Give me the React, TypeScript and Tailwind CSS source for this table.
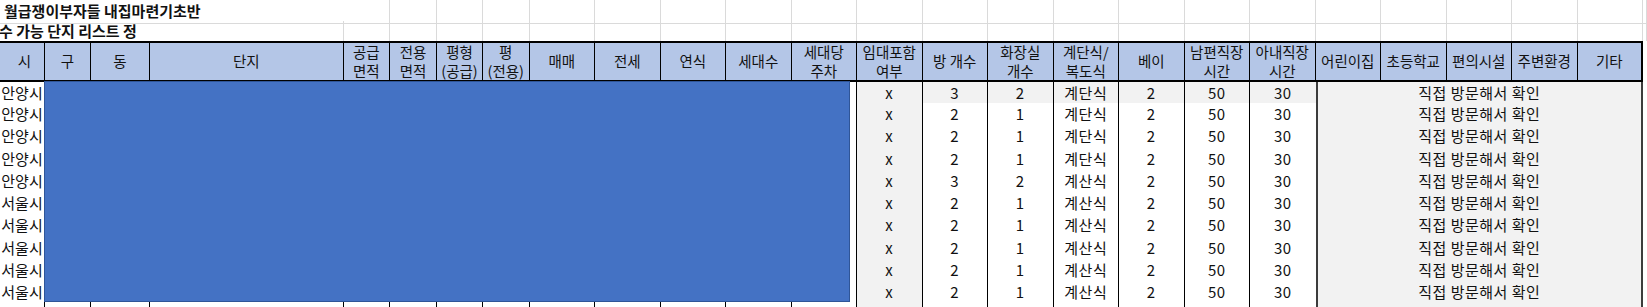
import React from 'react'

const GRID =
    'grid grid-cols-[45px_46px_59px_193.5px_46.5px_47px_46px_46.5px_repeat(17,65.5px)_4px]'

type Label = string | [string, string]

const HEADERS: Label[] = [
    '시',
    '구',
    '동',
    '단지',
    ['공급', '면적'],
    ['전용', '면적'],
    ['평형', '(공급)'],
    ['평', '(전용)'],
    '매매',
    '전세',
    '연식',
    '세대수',
    ['세대당', '주차'],
    ['임대포함', '여부'],
    '방 개수',
    ['화장실', '개수'],
    ['계단식/', '복도식'],
    '베이',
    ['남편직장', '시간'],
    ['아내직장', '시간'],
    '어린이집',
    '초등학교',
    '편의시설',
    '주변환경',
    '기타',
]

const ROWS = [
    { city: '안양시', rooms: '3', baths: '2', stair: '계단식' },
    { city: '안양시', rooms: '2', baths: '1', stair: '계단식' },
    { city: '안양시', rooms: '2', baths: '1', stair: '계단식' },
    { city: '안양시', rooms: '2', baths: '1', stair: '계단식' },
    { city: '안양시', rooms: '3', baths: '2', stair: '계산식' },
    { city: '서울시', rooms: '2', baths: '1', stair: '계산식' },
    { city: '서울시', rooms: '2', baths: '1', stair: '계산식' },
    { city: '서울시', rooms: '2', baths: '1', stair: '계산식' },
    { city: '서울시', rooms: '2', baths: '1', stair: '계산식' },
    { city: '서울시', rooms: '2', baths: '1', stair: '계산식' },
]

function TitleRows() {
    return (
        <>
            <div className={`${GRID} h-[21px]`}>
                <div className="col-span-5 flex items-center border-r border-b border-[#dadada] pl-[4px] text-[15px] font-bold whitespace-nowrap">
                    월급쟁이부자들 내집마련기초반
                </div>
                {Array.from({ length: 21 }).map((_, i) => (
                    <div key={i} className="border-r border-b border-[#dadada]" />
                ))}
            </div>
            <div className={`${GRID} h-[20px]`}>
                <div className="col-span-4 flex items-center overflow-hidden border-r border-[#dadada] text-[15px] font-bold whitespace-nowrap">
                    <span className="-ml-[1px]">수 가능 단지 리스트 정</span>
                </div>
                {Array.from({ length: 22 }).map((_, i) => (
                    <div key={i} className="border-r border-[#dadada]" />
                ))}
            </div>
        </>
    )
}

function HeaderRow() {
    return (
        <div className={`${GRID} h-[41px]`}>
            {HEADERS.map((h, i) => (
                <div
                    key={i}
                    className={`flex flex-col items-center justify-center border-t-2 border-b-2 border-r border-black bg-[#b4c6e7] text-[14.5px] leading-[18.5px] whitespace-nowrap ${
                        i === 0 ? 'pl-[5px]' : ''
                    } ${i === 24 ? 'border-r-2' : ''}`}
                >
                    {Array.isArray(h) ? (
                        <>
                            <span>{h[0]}</span>
                            <span>{h[1]}</span>
                        </>
                    ) : (
                        <span>{h}</span>
                    )}
                </div>
            ))}
            <div />
        </div>
    )
}

function Cell({ children, gray, last }: { children?: React.ReactNode; gray?: boolean; last?: boolean }) {
    return (
        <div
            className={`flex items-center justify-center border-b border-black text-[15px] tracking-[0.5px] whitespace-nowrap ${
                last ? '' : 'border-r'
            } ${gray ? 'bg-[#f2f2f2]' : 'bg-white'}`}
        >
            {children}
        </div>
    )
}

function DataRow({ row, index }: { row?: (typeof ROWS)[number]; index: number }) {
    const gray = index === 0
    const h = index === 0 ? 'h-[21px]' : 'h-[22.3px]'
    return (
        <div className={`${GRID} ${h}`}>
            <div className="flex items-center justify-center overflow-hidden border-r border-b border-black bg-white text-[15px] whitespace-nowrap">
                {row?.city}
            </div>
            {Array.from({ length: 12 }).map((_, i) => (
                <Cell key={i} />
            ))}
            <Cell gray>{row && 'x'}</Cell>
            <Cell gray={gray}>{row?.rooms}</Cell>
            <Cell gray={gray}>{row?.baths}</Cell>
            <Cell gray={gray}>{row?.stair}</Cell>
            <Cell gray={gray}>{row && '2'}</Cell>
            <Cell gray={gray}>{row && '50'}</Cell>
            <Cell gray={gray} last>
                {row && '30'}
            </Cell>
            <div className="col-span-5 flex items-center justify-center border-x-2 border-b border-x-[#3c3c3c] border-b-black bg-[#f2f2f2] text-[15px] tracking-[0.5px] whitespace-nowrap">
                {row && '직접 방문해서 확인'}
            </div>
            <div />
        </div>
    )
}

export default function App() {
    return (
        <div className="relative h-[307px] w-[1647px] overflow-hidden bg-white font-['Noto_Sans_CJK_KR','Malgun_Gothic',sans-serif] text-[#111]">
            <TitleRows />
            <HeaderRow />
            {ROWS.map((r, i) => (
                <DataRow key={i} row={r} index={i} />
            ))}
            <DataRow index={10} />

            {/* 가려진 영역 */}
            <div className="absolute top-[81px] left-[44px] h-[221px] w-[806px] border border-[#2f5597] bg-[#4472c4]" />
        </div>
    )
}
